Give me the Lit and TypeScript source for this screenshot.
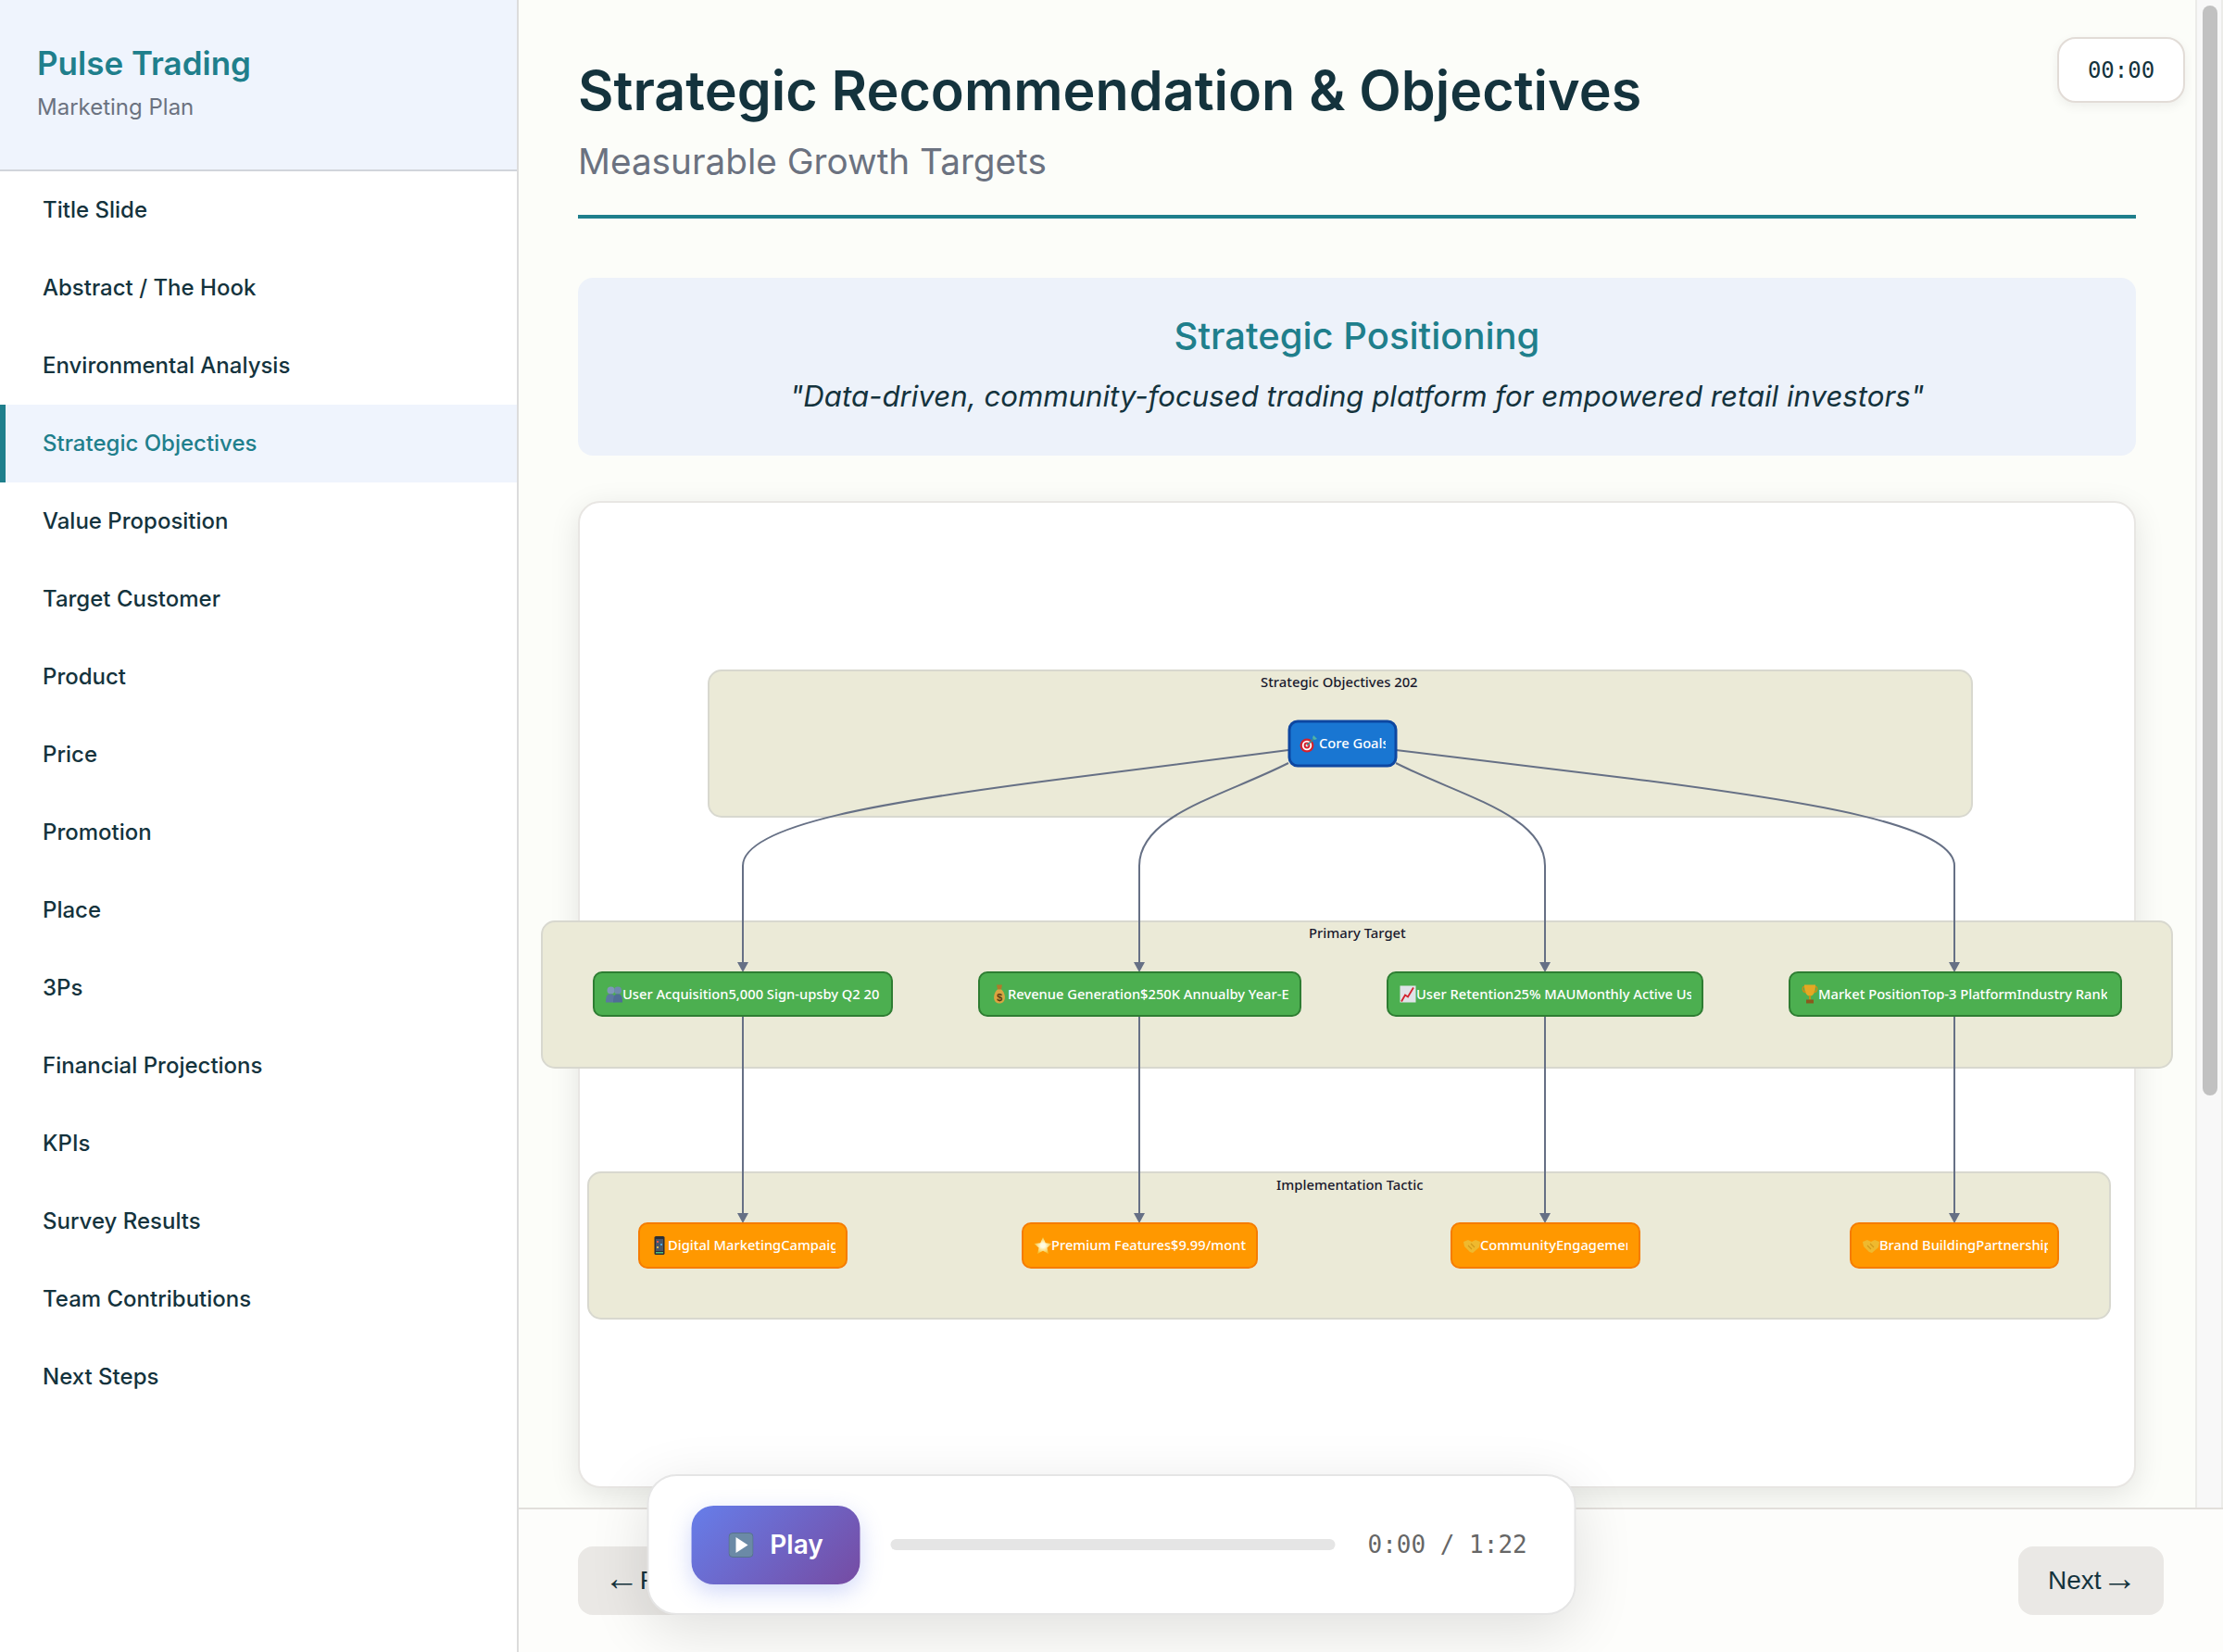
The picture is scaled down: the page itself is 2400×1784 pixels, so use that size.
import { LitElement, html, css, svg } from "lit";
import { customElement } from "lit/decorators.js";

type IconName = "target" | "people" | "money" | "chart" | "trophy" | "phone" | "star" | "hands";

interface FlowNode {
  x: number;
  w: number;
  icon: IconName;
  iconX: number;
  textX: number;
  clipX: number;
  label: string;
}

const SLIDES = [
  "Title Slide",
  "Abstract / The Hook",
  "Environmental Analysis",
  "Strategic Objectives",
  "Value Proposition",
  "Target Customer",
  "Product",
  "Price",
  "Promotion",
  "Place",
  "3Ps",
  "Financial Projections",
  "KPIs",
  "Survey Results",
  "Team Contributions",
  "Next Steps",
];

// Diagram coordinates are page pixels, the svg viewBox starts at the card's corner
const TARGETS: FlowNode[] = [
  { x: 641, w: 322, icon: "people", iconX: 653, textX: 672, clipX: 952, label: "User Acquisition5,000 Sign-upsby Q2 20" },
  { x: 1057, w: 347, icon: "money", iconX: 1069, textX: 1088, clipX: 1393, label: "Revenue Generation$250K Annualby Year-E" },
  { x: 1498, w: 340, icon: "chart", iconX: 1510, textX: 1529, clipX: 1826, label: "User Retention25% MAUMonthly Active User" },
  { x: 1932, w: 358, icon: "trophy", iconX: 1944, textX: 1963, clipX: 2275, label: "Market PositionTop-3 PlatformIndustry Ranki" },
];

const TACTICS: FlowNode[] = [
  { x: 690, w: 224, icon: "phone", iconX: 702, textX: 721, clipX: 902, label: "Digital MarketingCampaign" },
  { x: 1104, w: 253, icon: "star", iconX: 1116, textX: 1135, clipX: 1345, label: "Premium Features$9.99/mont" },
  { x: 1567, w: 203, icon: "hands", iconX: 1579, textX: 1598, clipX: 1757, label: "CommunityEngagemen" },
  { x: 1998, w: 224, icon: "hands", iconX: 2010, textX: 2029, clipX: 2211, label: "Brand BuildingPartnership" },
];

const GOAL: FlowNode = { x: 1392, w: 115, icon: "target", iconX: 1403, textX: 1424, clipX: 1496, label: "Core Goals" };

const EDGES = [
  "M1391 810 L1148 841 C960 865 802 890 802 935 L802 1042",
  "M1391 824 C1320 860 1230 880 1230 935 L1230 1042",
  "M1507 824 C1578 860 1668 880 1668 935 L1668 1042",
  "M1507 810 L1762 841 C1950 865 2110 890 2110 935 L2110 1042",
  "M802 1097 L802 1313",
  "M1230 1097 L1230 1313",
  "M1668 1097 L1668 1313",
  "M2110 1097 L2110 1313",
];

const ARROW_TIPS: [number, number][] = [
  [802, 1050], [1230, 1050], [1668, 1050], [2110, 1050],
  [802, 1321], [1230, 1321], [1668, 1321], [2110, 1321],
];

// Small stand-ins for the emoji the diagram labels start with, in a 20x20 box
function iconShape(name: IconName) {
  switch (name) {
    case "target":
      return svg`
        <circle cx="8" cy="12" r="7.5" fill="#d3232f" />
        <circle cx="8" cy="12" r="5.2" fill="#fff" />
        <circle cx="8" cy="12" r="3.4" fill="#d3232f" />
        <circle cx="8" cy="12" r="1.4" fill="#fff" />
        <path d="M8 12 L17 3" stroke="#3f8f8c" stroke-width="1.6" />
        <path d="M15 1 L19 5 L16 6 L14 4 Z" fill="#4fb3a8" />`;
    case "people":
      return svg`
        <circle cx="6.5" cy="6" r="4" fill="#7f98b8" />
        <circle cx="14" cy="6" r="4" fill="#6f8aad" />
        <path d="M1 19 C1 11 3 10 6.5 10 C10 10 11 12 11 19 Z" fill="#5b78a0" />
        <path d="M9 19 C9 11 11 10 14 10 C17.5 10 19 12 19 19 Z" fill="#4f6d96" />`;
    case "money":
      return svg`
        <path d="M7 0 L13 0 L12 5 L8 5 Z" fill="#b07a2a" />
        <path d="M8 5 L12 5 C17 9 18 20 10 20 C2 20 3 9 8 5 Z" fill="#d9a441" />
        <text x="10" y="17" class="glyph">$</text>`;
    case "chart":
      return svg`
        <rect x="1.5" y="1" width="17" height="18" fill="#dfe3e8" />
        <path d="M3 18 L7 11 L10 13 L16 3" fill="none" stroke="#d3232f" stroke-width="1.8" />`;
    case "trophy":
      return svg`
        <path d="M4 0 L16 0 C16 6 15 11 11 12 L9 12 C5 11 4 6 4 0 Z" fill="#e5a823" />
        <path d="M4 2 C1 2 2 8 5.5 8 M16 2 C19 2 18 8 14.5 8" fill="none" stroke="#c98f17" stroke-width="1.4" />
        <rect x="9" y="12" width="2" height="4" fill="#c98f17" />
        <rect x="6" y="16" width="8" height="4" fill="#8a5a1c" />`;
    case "phone":
      return svg`
        <rect x="4.5" y="0" width="11" height="20" rx="1.6" fill="#2b2f36" />
        <rect x="6" y="3" width="8" height="13" fill="#48566a" />
        <rect x="7" y="5" width="2" height="2" fill="#e05a4f" />
        <rect x="11" y="8" width="2" height="2" fill="#4fa8e0" />
        <rect x="7" y="11" width="2" height="2" fill="#e0b94f" />
        <rect x="6" y="17" width="8" height="1.5" fill="#4fbf7a" />`;
    case "star":
      return svg`
        <path d="M10 1 L12.8 7.2 L19.5 8 L14.5 12.5 L15.9 19 L10 15.7 L4.1 19 L5.5 12.5 L0.5 8 L7.2 7.2 Z" fill="url(#star-fill)" />`;
    case "hands":
      return svg`
        <path d="M1 6 L6 4 L10 6 L14 4 L19 6 L18 12 L11 18 L8 17 L2 11 Z" fill="#efb92e" />
        <path d="M6 10 L10 14 M9 8 L13 12" stroke="#d29a1c" stroke-width="1.2" />`;
  }
}

@customElement("strategy-diagram")
export class StrategyDiagram extends LitElement {
  static styles = css`
    :host {
      display: block;
    }
    svg {
      display: block;
      overflow: visible;
    }
    .cluster {
      fill: #ebead7;
      stroke: #d8d8cf;
      stroke-width: 2;
    }
    .cluster-title {
      font: 500 14.8px "Noto Sans", sans-serif;
      fill: #1a1a2e;
    }
    .edge {
      fill: none;
      stroke: #667085;
      stroke-width: 2;
    }
    .tip {
      fill: #667085;
    }
    .goal {
      fill: #1976d2;
      stroke: #0d47a1;
      stroke-width: 3;
    }
    .target {
      fill: #4caf50;
      stroke: #2e7d32;
      stroke-width: 2;
    }
    .tactic {
      fill: #ff9800;
      stroke: #f57c00;
      stroke-width: 2;
    }
    .node-label {
      font: 500 14.7px "Noto Sans", sans-serif;
      fill: #fff;
    }
    .glyph {
      font: 700 11px "Liberation Sans", sans-serif;
      fill: #5a3d12;
      text-anchor: middle;
    }
  `;

  private renderNode(node: FlowNode, y: number, h: number, kind: string) {
    const clipId = `clip-${node.x}`;
    return svg`
      <rect class=${kind} x=${node.x} y=${y} width=${node.w} height=${h} rx="9" />
      <clipPath id=${clipId}>
        <rect x=${node.textX} y=${y} width=${node.clipX - node.textX} height=${h} />
      </clipPath>
      <g transform="translate(${node.iconX} ${y + h / 2 - 10})">${iconShape(node.icon)}</g>
      <text class="node-label" x=${node.textX} y=${y + h / 2 + 5} clip-path="url(#${clipId})">${node.label}</text>
    `;
  }

  render() {
    return html`
      <svg width="1678" height="1062" viewBox="626 543 1678 1062">
        <defs>
          <radialGradient id="star-fill">
            <stop offset="0.25" stop-color="#fffbe0" />
            <stop offset="1" stop-color="#f6c02c" />
          </radialGradient>
        </defs>
        <rect class="cluster" x="765" y="724" width="1364" height="158" rx="14" />
        <rect class="cluster" x="585" y="995" width="1760" height="158" rx="14" />
        <rect class="cluster" x="635" y="1266" width="1643" height="158" rx="14" />
        <text class="cluster-title" x="1361" y="742">Strategic Objectives 202</text>
        <text class="cluster-title" x="1413" y="1013">Primary Target</text>
        <text class="cluster-title" x="1378" y="1285">Implementation Tactic</text>
        ${EDGES.map((d) => svg`<path class="edge" d=${d} />`)}
        ${ARROW_TIPS.map(
          ([x, y]) => svg`<path class="tip" d="M${x - 6} ${y - 11} L${x + 6} ${y - 11} L${x} ${y} Z" />`
        )}
        ${this.renderNode(GOAL, 779, 48, "goal")}
        ${TARGETS.map((n) => this.renderNode(n, 1050, 47, "target"))}
        ${TACTICS.map((n) => this.renderNode(n, 1321, 48, "tactic"))}
      </svg>
    `;
  }
}

@customElement("app-root")
export class AppRoot extends LitElement {
  static styles = css`
    :host {
      display: grid;
      grid-template-columns: 560px 1fr;
      height: 100vh;
      overflow: hidden;
      font-family: Inter, "Liberation Sans", sans-serif;
      color: #14333d;
      background: #fcfdf9;
    }

    /* sidebar */
    .sidebar {
      background: #fff;
      border-right: 2px solid #dcdcdc;
    }
    .brand {
      height: 185px;
      box-sizing: border-box;
      padding: 44px 40px 0;
      background: #eff4fd;
      border-bottom: 2px solid #d1d5db;
    }
    .brand h2 {
      margin: 0;
      font-size: 35px;
      line-height: 48px;
      font-weight: 600;
      color: #1f7f8c;
    }
    .brand p {
      margin: 8px 0 0;
      font-size: 24px;
      line-height: 32px;
      color: #6b7280;
    }
    .nav-item {
      height: 84px;
      box-sizing: border-box;
      display: flex;
      align-items: center;
      padding: 0 0 2px 40px;
      border-left: 6px solid transparent;
      font-size: 24px;
      font-weight: 500;
    }
    .nav-item.active {
      color: #1f7f8c;
      background: #eff4fd;
      border-left-color: #1f7f8c;
    }

    /* slide */
    .main {
      display: flex;
      flex-direction: column;
      min-width: 0;
      height: 100vh;
    }
    .viewport {
      flex: 1;
      min-height: 0;
      display: flex;
    }
    .scroller {
      flex: 1;
      min-width: 0;
      overflow: hidden;
      box-sizing: border-box;
      padding: 63px 64px 0;
    }
    .scrollbar {
      flex: none;
      width: 30px;
      box-sizing: border-box;
      padding: 6px 4px 0 6px;
      background: #f8f8f8;
      border-left: 2px solid #ecece9;
      border-right: 2px solid #ecece9;
    }
    .thumb {
      height: 1177px;
      border-radius: 8px;
      background: #c1c1c1;
    }
    .slide-head {
      height: 173px;
      box-sizing: border-box;
      border-bottom: 4px solid #1f7f8c;
    }
    .slide-head h1 {
      margin: 0;
      font-size: 59.2px;
      line-height: 70px;
      font-weight: 600;
    }
    .slide-head p {
      margin: 17px 0 0;
      font-size: 38.7px;
      line-height: 48px;
      color: #6b7280;
    }
    .positioning {
      height: 192px;
      box-sizing: border-box;
      margin-top: 64px;
      padding-top: 39px;
      border-radius: 16px;
      background: #edf2fa;
      text-align: center;
    }
    .positioning h3 {
      margin: 0;
      font-size: 40px;
      line-height: 48px;
      font-weight: 500;
      color: #1f7f8c;
    }
    .positioning p {
      margin: 18px 0 0;
      font-size: 31.2px;
      line-height: 46px;
      font-style: italic;
    }
    .diagram-card {
      height: 1066px;
      box-sizing: border-box;
      margin-top: 49px;
      background: #fff;
      border: 2px solid #e8e6e3;
      border-radius: 24px;
      box-shadow: 0 8px 32px rgba(0, 0, 0, 0.1);
    }

    /* bottom nav */
    .pager {
      flex: none;
      display: flex;
      justify-content: space-between;
      padding: 40px 64px;
      background: #fdfdfb;
      border-top: 2px solid #e2dfdb;
    }
    .pager button {
      height: 74px;
      width: 157px;
      padding: 0 0 0 32px;
      border: none;
      border-radius: 16px;
      background: #eae8e5;
      color: #14333d;
      text-align: left;
      white-space: nowrap;
      word-spacing: -7px;
      font: 28px "Liberation Sans", Arial, sans-serif;
    }
    .pager button.prev {
      width: 210px;
      padding-left: 28px;
    }
    .arrow {
      font-size: 38px;
      line-height: 0;
      vertical-align: -1px;
    }

    /* overlays */
    .clock {
      position: absolute;
      top: 40px;
      left: 2221px;
      width: 138px;
      height: 71px;
      box-sizing: border-box;
      display: flex;
      align-items: center;
      justify-content: center;
      background: #fff;
      border: 2px solid #e2dcd7;
      border-radius: 20px;
      box-shadow: 0 4px 12px rgba(0, 0, 0, 0.06);
      font: 24px "DejaVu Sans Mono", monospace;
    }
    .player {
      position: absolute;
      left: 50%;
      bottom: 40px;
      transform: translateX(-50%);
      width: 1003px;
      height: 152px;
      box-sizing: border-box;
      display: flex;
      align-items: center;
      padding: 0 46px;
      background: #fff;
      border: 2px solid #e5e5e5;
      border-radius: 32px;
      box-shadow: 0 16px 64px rgba(0, 0, 0, 0.12);
    }
    .play {
      flex: none;
      width: 182px;
      height: 85px;
      display: flex;
      align-items: center;
      justify-content: center;
      gap: 18px;
      border: none;
      border-radius: 24px;
      background: linear-gradient(135deg, #667eea, #764ba2);
      box-shadow: 0 8px 24px rgba(102, 126, 234, 0.3);
      color: #fff;
      font: 600 28px Inter, sans-serif;
    }
    .progress {
      flex: 1;
      height: 12px;
      margin: 0 35px 0 33px;
      border-radius: 6px;
      background: #e5e5e5;
    }
    .time {
      flex: none;
      width: 177px;
      font: 26px "DejaVu Sans Mono", monospace;
      color: #666;
    }
  `;

  render() {
    return html`
      <aside class="sidebar">
        <div class="brand">
          <h2>Pulse Trading</h2>
          <p>Marketing Plan</p>
        </div>
        ${SLIDES.map(
          (name) => html`<div class="nav-item ${name === "Strategic Objectives" ? "active" : ""}">${name}</div>`
        )}
      </aside>
      <div class="main">
        <div class="viewport">
          <div class="scroller">
            <header class="slide-head">
              <h1>Strategic Recommendation &amp; Objectives</h1>
              <p>Measurable Growth Targets</p>
            </header>
            <section class="positioning">
              <h3>Strategic Positioning</h3>
              <p>"Data-driven, community-focused trading platform for empowered retail investors"</p>
            </section>
            <div class="diagram-card"><strategy-diagram></strategy-diagram></div>
          </div>
          <div class="scrollbar"><div class="thumb"></div></div>
        </div>
        <footer class="pager">
          <button class="prev"><span class="arrow">←</span> Previous</button>
          <button>Next <span class="arrow">→</span></button>
        </footer>
      </div>
      <div class="clock">00:00</div>
      <div class="player">
        <button class="play">
          <svg width="27" height="27" viewBox="0 0 27 27">
            <rect x="0.5" y="0.5" width="26" height="26" rx="4" fill="#6b8aa6" stroke="#56728c" />
            <path d="M8 5 L21 13.5 L8 22 Z" fill="#fff" />
          </svg>
          Play
        </button>
        <div class="progress"></div>
        <div class="time">0:00 / 1:22</div>
      </div>
    `;
  }
}
